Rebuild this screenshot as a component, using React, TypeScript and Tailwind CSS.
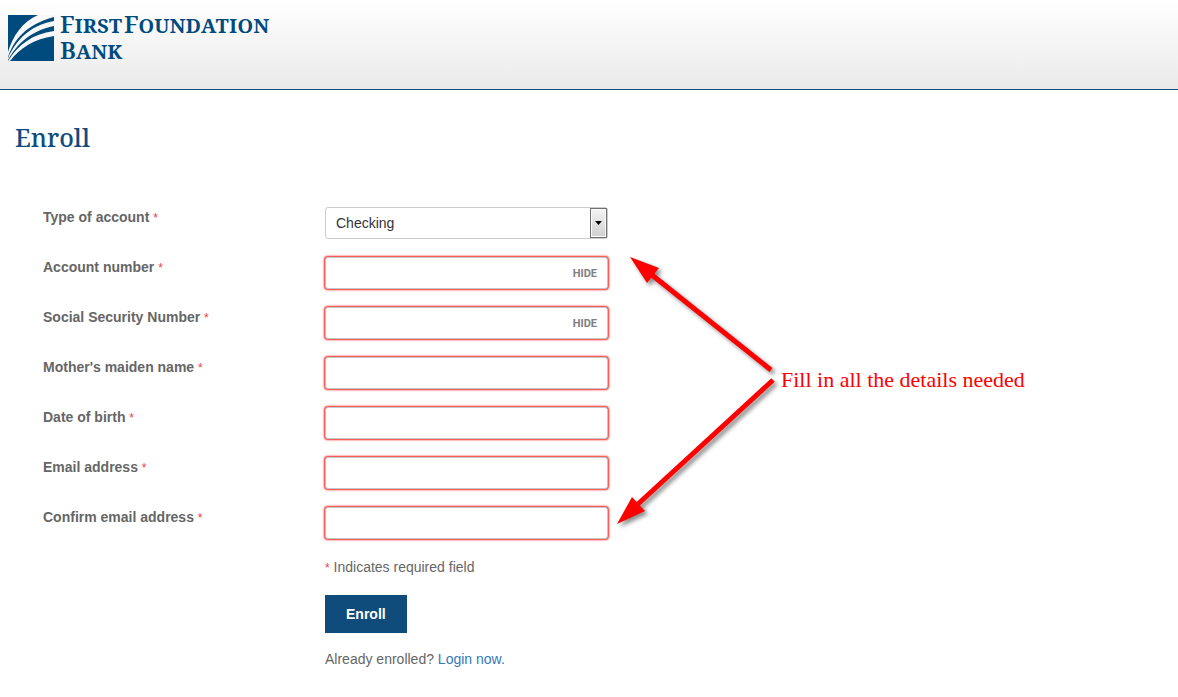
// src/App.tsx
import React from 'react';

interface FieldProps {
  id: string;
  label: string;
  type?: string;
  hideable?: boolean;
}

const fields: FieldProps[] = [
  { id: 'account-number', label: 'Account number', hideable: true },
  { id: 'ssn', label: 'Social Security Number', hideable: true },
  { id: 'maiden-name', label: "Mother's maiden name" },
  { id: 'birth-date', label: 'Date of birth' },
  { id: 'email', label: 'Email address', type: 'email' },
  { id: 'confirm-email', label: 'Confirm email address', type: 'email' },
];

const Logo: React.FC = () => (
  <a href="#" aria-label="First Foundation Bank" className="flex gap-[6px] text-[#004b7d]">
    <svg width="46" height="46" viewBox="0 0 46 46" className="mt-1 shrink-0" aria-hidden="true">
      <rect width="46" height="46" fill="#004b7d" />
      <g fill="#f8f8f8">
        <path d="M0 37C5 21 14 7 30 0H46V2C17 10 6 25 0 42Z" />
        <path d="M0 43C8 26 20 11 46 6V11C22 16 9 29 0 45Z" />
        <path d="M0 46C10 30 24 19 46 16V21C26 24 12 33 2 46Z" />
      </g>
    </svg>
    <span className="flex flex-col font-['Noto_Serif','DejaVu_Serif_Condensed','DejaVu_Serif',serif] text-[24px] font-semibold leading-[26px] [font-variant-caps:small-caps]">
      <span className="flex gap-[2px]">
        <span>First</span>
        <span>Foundation</span>
      </span>
      <span>Bank</span>
    </span>
  </a>
);

const Required: React.FC = () => <span className="text-xs font-normal text-[#f03c3c]">*</span>;

const Row: React.FC<{ id: string; label: string; children: React.ReactNode }> = ({ id, label, children }) => (
  <div className="flex items-start">
    <label htmlFor={id} className="w-[282px] shrink-0 font-bold">
      {label} <Required />
    </label>
    <div className="relative w-full max-w-[283px]">{children}</div>
  </div>
);

const Field: React.FC<FieldProps> = ({ id, label, type = 'text', hideable }) => (
  <Row id={id} label={label}>
    <input
      id={id}
      type={type}
      required
      className="block h-8 w-full rounded-[3px] border border-[#c0c8c8] bg-white px-[10px] text-[#333] shadow-[0_0_2px_1px_#ff2020] outline-none"
    />
    {hideable && (
      <button type="button" className="absolute inset-y-0 right-[11px] pt-px font-['Roboto',sans-serif] text-[11px] font-bold text-[#808080]">
        HIDE
      </button>
    )}
  </Row>
);

const Annotation: React.FC = () => (
  <>
    <svg
      width="180"
      height="290"
      viewBox="610 250 180 290"
      className="pointer-events-none absolute top-[160px] left-[610px] overflow-visible"
      aria-hidden="true"
    >
      <g fill="#ff0000" stroke="#ff0000" className="drop-shadow-[3px_3px_2px_rgba(0,0,0,0.45)]">
        <path d="M652 275L771 370" strokeWidth="5" />
        <path d="M630 257L659 268L647 283Z" stroke="none" />
        <path d="M638 504L773 380" strokeWidth="5" />
        <path d="M617 524L632 497L645 511Z" stroke="none" />
      </g>
    </svg>
    <p className="absolute top-[276px] left-[781px] font-['Liberation_Serif',serif] text-[22px] leading-7 whitespace-nowrap text-[#ff0000]">
      Fill in all the details needed
    </p>
  </>
);

const App: React.FC = () => {
  return (
    <div className="bg-white font-['Liberation_Sans',Arial,sans-serif] text-sm text-[#666]">
      <header className="flex h-[90px] items-start border-b border-[#0f4c7b] bg-linear-to-b from-white to-[#eaeaea] px-2 pt-[11px]">
        <Logo />
      </header>

      <main className="relative px-[15px] pt-[29px] pb-7">
        <h1 className="font-['Noto_Serif','DejaVu_Serif_Condensed','DejaVu_Serif',serif] text-[25px] font-medium leading-9 text-[#0f4c7b]">
          Enroll
        </h1>

        <form className="mt-[52px] flex flex-col gap-[18px] px-7">
          <Row id="account-type" label="Type of account">
            <select
              id="account-type"
              className="block h-8 w-full appearance-none rounded-[3px] border border-[#ccc] bg-white px-[10px] text-[#333]"
            >
              <option>Checking</option>
              <option>Savings</option>
            </select>
            <span className="pointer-events-none absolute inset-y-px right-px flex w-[17px] items-center justify-center border border-[#707070] bg-linear-to-b from-[#f4f4f4] to-[#d0d0d0] shadow-[inset_0_0_0_1px_#fafafa]">
              <svg width="7" height="4" viewBox="0 0 7 4" aria-hidden="true">
                <path d="M0 0H7L3.5 4Z" fill="#000" />
              </svg>
            </span>
          </Row>

          {fields.map((field) => (
            <Field key={field.id} {...field} />
          ))}

          <div className="flex flex-col items-start gap-[18px] pl-[282px]">
            <p>
              <Required /> Indicates required field
            </p>
            <button type="submit" className="h-[38px] bg-[#0f4c7b] px-[21px] font-bold text-white">
              Enroll
            </button>
            <p className="-mt-[2px]">
              Already enrolled?{' '}
              <a href="#" className="text-[#337ab7]">
                Login now.
              </a>
            </p>
          </div>
        </form>

        <Annotation />
      </main>
    </div>
  );
};

export default App;
